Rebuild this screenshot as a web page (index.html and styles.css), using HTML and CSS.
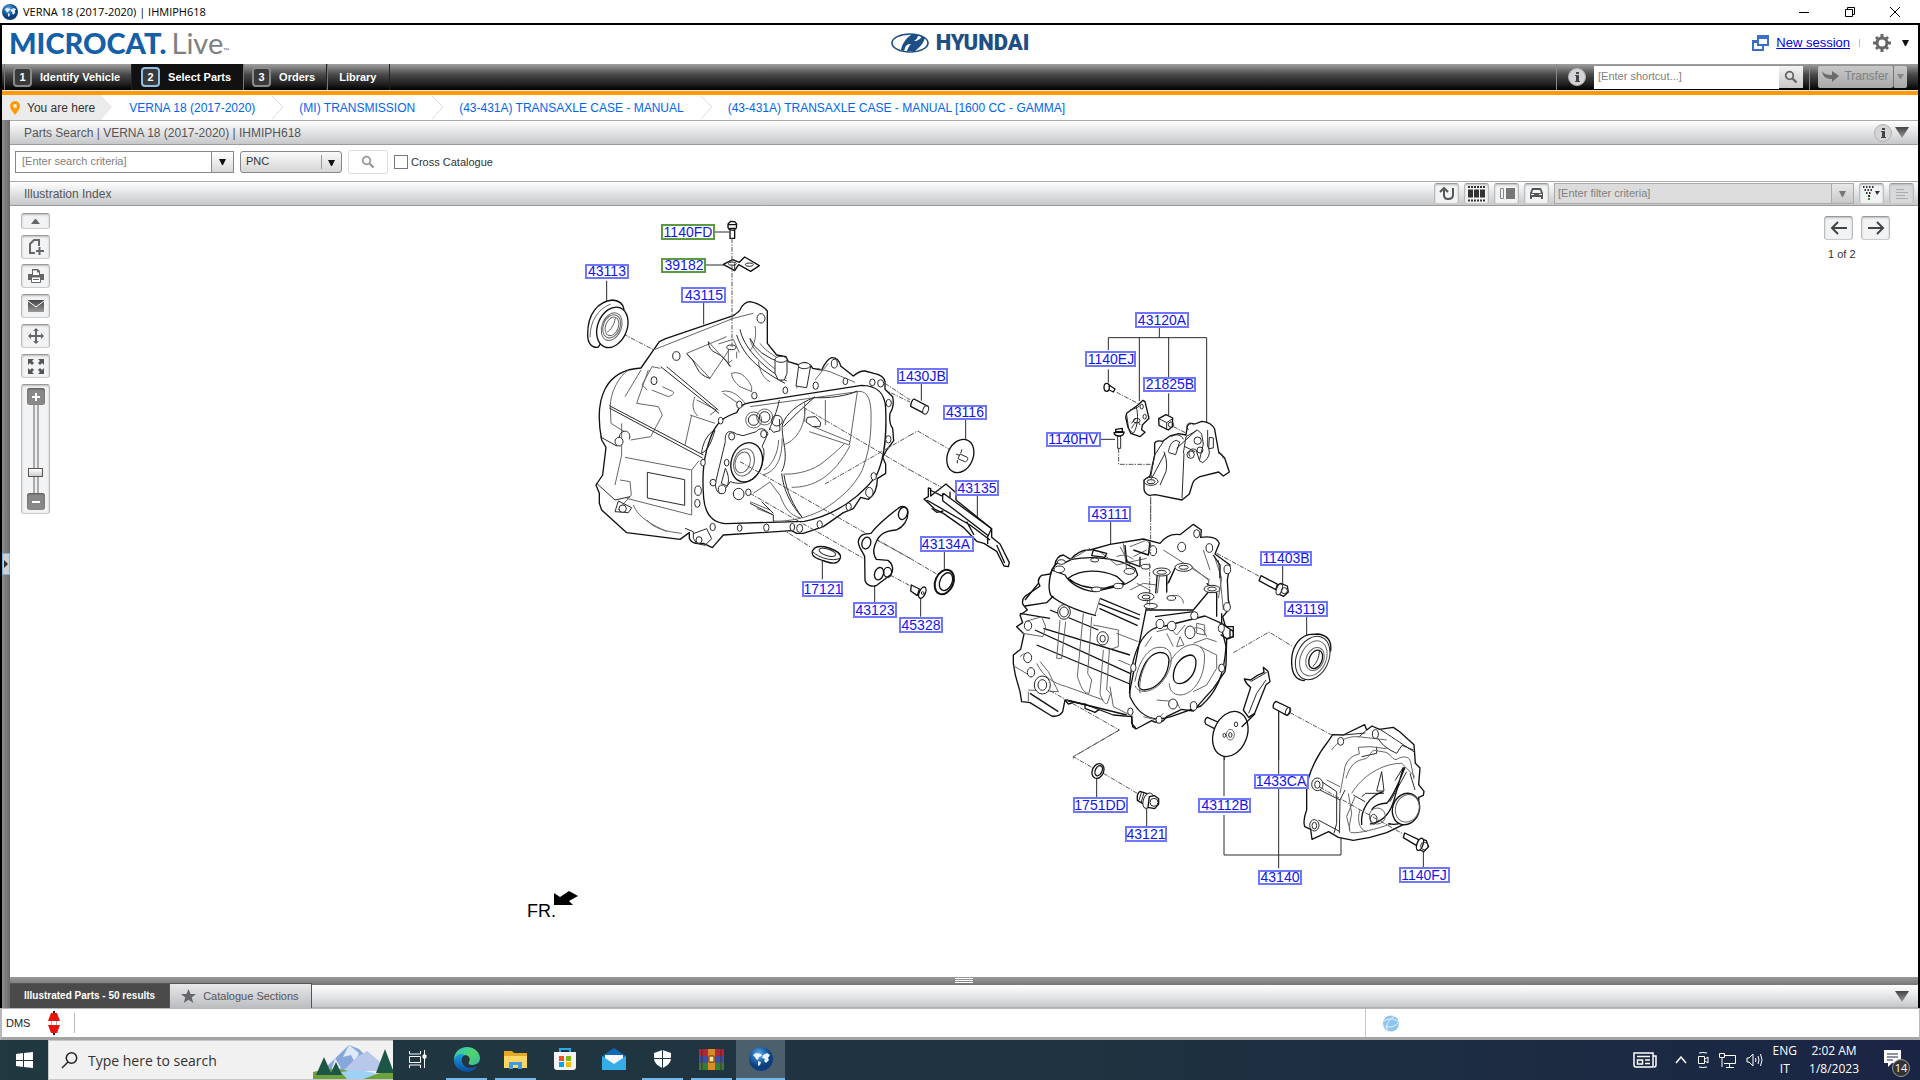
FILE: index.html
```html
<!DOCTYPE html>
<html lang="en">
<head>
<meta charset="utf-8">
<title>VERNA 18 (2017-2020) | IHMIPH618</title>
<link rel="stylesheet" href="styles.css">
</head>
<body>
<svg class="defs" aria-hidden="true">
  <defs>
    <radialGradient id="globeFill" cx="40%" cy="30%"><stop offset="0" stop-color="#6fb2ea"/><stop offset=".6" stop-color="#1f66ae"/><stop offset="1" stop-color="#0d3f7c"/></radialGradient>
    <linearGradient id="steel" x2="0" y2="1"><stop offset="0" stop-color="#444"/><stop offset="1" stop-color="#999"/></linearGradient>
    <linearGradient id="edge1" x2="1" y2="1"><stop offset="0" stop-color="#2bc3d2"/><stop offset=".5" stop-color="#52d56c"/><stop offset="1" stop-color="#3bb7a0"/></linearGradient>
    <linearGradient id="edge2" x2="0" y2="1"><stop offset="0" stop-color="#1b9de2"/><stop offset="1" stop-color="#0c4a9a"/></linearGradient>
    <symbol id="globe" viewBox="0 0 24 24">
      <circle cx="12" cy="12" r="12" fill="url(#globeFill)"/>
      <path d="M4 8l3-2 5 1 1 2-3 1-1 3-2-1-1-2zM9 14l3 1-1 3-2 1zM14 8l4-2 3 2-2 3 1 2-3 3-2-2 1-2-3-1z" fill="#e7f3fd"/>
    </symbol>
    <symbol id="info" viewBox="0 0 18 18">
      <circle cx="9" cy="9" r="8.500" fill="#d4d4d6" stroke="#b2b2b4"/>
      <path d="M8 4h3v2H8zM7 7h4v6h1v1H7v-1h1V8H7z" fill="#444"/>
    </symbol>
    <symbol id="lens" viewBox="0 0 14 14"><circle cx="5.500" cy="5.500" r="3.800" fill="none" stroke="currentColor" stroke-width="1.800"/><path d="M8.500 8.500l4 4" stroke="currentColor" stroke-width="2.400"/></symbol>
    <symbol id="down" viewBox="0 0 14 11"><path d="M0 0h14L7 11z" fill="url(#steel)"/></symbol>
  </defs>
</svg>

<header class="titlebar">
  <svg class="title-icon" width="16" height="16"><use href="#globe"/></svg>
  <span class="title-text">VERNA 18 (2017-2020) | IHMIPH618</span>
  <div class="window-buttons">
    <button aria-label="Minimize"><svg width="12" height="12"><path d="M1 6.500h10" stroke="#000"/></svg></button>
    <button aria-label="Restore"><svg width="12" height="12" fill="none" stroke="#000"><path d="M1.500 3.500h7v7h-7zM3.500 3.500v-2h7v7h-2"/></svg></button>
    <button aria-label="Close"><svg width="12" height="12"><path d="M1 1l10 10M11 1L1 11" stroke="#000"/></svg></button>
  </div>
</header>

<div class="shell">
  <div class="brandbar">
    <div class="product"><b>MICROCAT<i>.</i></b><span>Live</span><small>™</small></div>
    <div class="maker">
      <svg width="38" height="20" viewBox="0 0 38 20"><ellipse cx="19" cy="10" rx="18" ry="9" fill="#fff" stroke="#1d4f86" stroke-width="1.600"/><path d="M10 17C11 11 15 5 20 2l7 0c0 3-2 5-4 6 2 0 3 0 4-1 2-1 3-2 4-4l3 2c-2 6-6 10-10 13l-8 0c1-3 2-5 4-7-2 0-3 0-4 1-2 1-2 4-3 6z" fill="#1d4f86"/></svg>
      <span>HYUNDAI</span>
    </div>
    <div class="session">
      <svg width="17" height="17" viewBox="0 0 17 17"><path d="M5 0h12v11h-5v5H0V5h5zM7 4v5h8V4zM5 8H2v6h8v-3H5z" fill="#3c6fc8" fill-rule="evenodd"/></svg>
      <a href="#">New session</a>
      <span class="bar"></span>
      <button class="gear" aria-label="Settings">
        <svg width="18" height="18" viewBox="0 0 18 18"><circle cx="9" cy="9" r="5" fill="none" stroke="#666" stroke-width="3"/><path d="M9 0v4M9 14v4M0 9h4M14 9h4M3 3l2 2M13 13l2 2M3 15l2-2M13 5l2-2" stroke="#666" stroke-width="3"/></svg>
        <svg width="7" height="6"><path d="M0 0h7L4 6H3z" fill="#111"/></svg>
      </button>
    </div>
  </div>

  <nav class="mainnav">
    <a class="step" href="#"><span>1</span>Identify Vehicle</a>
    <a class="step current" href="#"><span>2</span>Select Parts</a>
    <a class="step" href="#"><span>3</span>Orders</a>
    <a class="step plain" href="#">Library</a>
    <div class="nav-tools">
      <svg width="18" height="18"><use href="#info"/></svg>
      <input type="text" aria-label="Shortcut" placeholder="[Enter shortcut...]"><button class="go" aria-label="Search"><svg width="14" height="14"><use href="#lens"/></svg></button>
      <div class="transfer">
        <button><svg width="17" height="11" viewBox="0 0 17 11"><path d="M0 0c2 3 5 4 10 4V0l7 5-7 6V8C4 8 1 6 0 0z" fill="#6b6b6b"/></svg>Transfer</button><button aria-label="Transfer options"><svg width="7" height="5"><path d="M0 0h7L4 5H3z" fill="#888"/></svg></button>
      </div>
    </div>
  </nav>

  <nav class="crumbs" aria-label="Breadcrumb">
    <span class="here"><svg width="10" height="14" viewBox="0 0 10 14"><path fill-rule="evenodd" d="M5 0a5 5 0 0 1 5 5c0 3-3 6-5 9C3 11 0 8 0 5a5 5 0 0 1 5-5zm0 3a2 2 0 1 0 0 4 2 2 0 0 0 0-4z" fill="#ff9900"/></svg>You are here</span>
    <svg class="chev" width="12" height="25"><path d="M0 0h1l11 12L1 25H0z" fill="#ebebeb"/></svg>
    <a href="#">VERNA 18 (2017-2020)</a>
    <svg class="chev" width="12" height="25"><path d="M0 1l11 11L0 24" fill="none" stroke="#ddd"/></svg>
    <a href="#">(MI) TRANSMISSION</a>
    <svg class="chev" width="12" height="25"><path d="M0 1l11 11L0 24" fill="none" stroke="#ddd"/></svg>
    <a href="#">(43-431A) TRANSAXLE CASE - MANUAL</a>
    <svg class="chev" width="12" height="25"><path d="M0 1l11 11L0 24" fill="none" stroke="#ddd"/></svg>
    <a href="#">(43-431A) TRANSAXLE CASE - MANUAL [1600 CC - GAMMA]</a>
  </nav>

  <div class="workspace">
    <aside class="rail"><button aria-label="Expand sidebar"><svg width="4" height="8"><path d="M0 0l4 4-4 4z" fill="#333"/></svg></button></aside>
    <main>
      <header class="panel-head">
        <h2>Parts Search | VERNA 18 (2017-2020) | IHMIPH618</h2>
        <div class="head-end"><svg width="18" height="18"><use href="#info"/></svg><svg width="14" height="11"><use href="#down"/></svg></div>
      </header>
      <form class="searchbar">
        <div class="combo"><input type="text" aria-label="Search criteria" placeholder="[Enter search criteria]"><button type="button" aria-label="Recent searches"><svg width="7" height="6"><path d="M0 0h7L4 6H3z" fill="#111"/></svg></button></div>
        <div class="pick"><select aria-label="Search type"><option>PNC</option></select><svg width="28" height="14"><path d="M.5 0v14" stroke="#999"/><path d="M7 5h7l-3 6h-1z" fill="#111"/></svg></div>
        <button type="button" class="find" aria-label="Search"><svg width="14" height="14"><use href="#lens"/></svg></button>
        <label class="tick"><input type="checkbox">Cross Catalogue</label>
      </form>
      <header class="panel-head">
        <h2>Illustration Index</h2>
        <div class="filters">
          <button class="tool" aria-label="Back"><svg width="16" height="14" fill="none" stroke="#555" stroke-width="2"><path d="M5 3v5c0 3 1 4 4 4s5-1 5-4V1M1 5l4-4 4 4"/></svg></button>
          <button class="tool" aria-label="Thumbnails"><svg width="18" height="16"><path d="M0 1h18M0 14.500h18" stroke="#333" stroke-width="2" stroke-dasharray="2 1"/><path d="M0 3.500h5v8H0zM6 3.500h5v8H6zM12 3.500h5v8h-5z" fill="#333"/></svg></button>
          <button class="tool" aria-label="List"><svg width="16" height="13"><path d="M1.500 1.500h3v10h-3z" fill="none" stroke="#888"/><path d="M7 1h9v11H7z" fill="#777"/></svg></button>
          <button class="tool" aria-label="Vehicle"><svg width="13" height="13"><path fill-rule="evenodd" d="M2 1h9l2 5v6h-2v-2H2v2H0V6zM3 3L2 6h9l-1-3zM1 7v1h3V7zM9 7v1h3V7z" fill="#555"/></svg></button>
          <div class="combo wide"><input type="text" aria-label="Filter criteria" placeholder="[Enter filter criteria]"><button aria-label="Filter options"><svg width="7" height="6"><path d="M0 0h7L4 6H3z" fill="#777"/></svg></button></div>
          <button class="tool" aria-label="Filter"><svg width="17" height="15"><path d="M0 1h11M1.500 4h9M3 7h6" stroke="#333" stroke-width="2" stroke-dasharray="1.500 1.500"/><path d="M5 9h2v2H5zM12 5h5l-3 4z" fill="#333"/><path d="M5 12h2v2H5z" fill="#2b9b2b"/></svg></button>
          <button class="tool" aria-label="Details" disabled><svg width="14" height="12"><path d="M1 1.500h8M1 4.500h12M1 7.500h9M1 10.500h12" stroke="#aaa"/></svg></button>
        </div>
      </header>

      <section class="canvas">
        <div class="tools">
          <button class="tool short" aria-label="Collapse"><svg width="9" height="5"><path d="M0 5l4-5h1l4 5z" fill="#666"/></svg></button>
          <button class="tool tall" aria-label="Add note"><svg width="16" height="16" fill="none" stroke="#666" stroke-width="2"><path d="M7 14H2V5l4-4h5v6M11.500 8v8M8 12h8"/></svg></button>
          <button class="tool tall" aria-label="Print"><svg width="16" height="14"><path d="M4 0h6l2 2v3H4zM0 5h16v6h-3V8H3v3H0z" fill="#666"/><path d="M5 1.500h4v2h2V6H5z" fill="#fff"/><path d="M3.500 8h9v5.500h-9zM5 10.500h6" fill="#fff" stroke="#666"/></svg></button>
          <button class="tool tall" aria-label="Email"><svg width="16" height="12"><path d="M0 0h16v12H0z" fill="url(#steel)"/><path d="M0 1l8 6 8-6" fill="none" stroke="#fff"/></svg></button>
          <button class="tool tall" aria-label="Pan"><svg width="16" height="16"><path d="M7 3h2v4h4v2H9v4H7V9H3V7h4zM5 3l3-3 3 3zM5 13l3 3 3-3zM3 5L0 8l3 3zM13 5l3 3-3 3z" fill="#666"/></svg></button>
          <button class="tool tall" aria-label="Fit"><svg width="16" height="15"><path d="M0 0h6L4 2l2 2-2 2-2-2-2 2zM16 0h-6l2 2-2 2 2 2 2-2 2 2zM0 15h6l-2-2 2-2-2-2-2 2-2-2zM16 15h-6l2-2-2-2 2-2 2 2 2-2z" fill="#555"/></svg></button>
          <div class="zoomer">
            <button aria-label="Zoom in"><svg width="18" height="17"><path d="M5 9h8M9 5v8" stroke="#fff" stroke-width="2"/></svg></button>
            <input type="range" min="0" max="100" value="20" aria-label="Zoom">
            <button aria-label="Zoom out"><svg width="18" height="17"><path d="M5 9h8" stroke="#fff" stroke-width="2"/></svg></button>
          </div>
        </div>

        <svg class="drawing" viewBox="504 206 920 771" role="group" aria-label="Transaxle case, exploded view">
          <!-- clutch housing -->
          <svg x="570" y="210" width="340" height="350" viewBox="0 0 1020 1050" class="ink">
            <g class="axis"><path d="M160 372l90 47M940 538l80 38M920 990l100 55M570 915l150 95"/></g>
            <path d="M432 66h45M110 212v62M401 278v65M407 165h55"/>
            <path fill="#fff" class="bold" d="M480 55h14v30h-14zM474 42l8-8 12 1 6 7-1 12-8 7-13-2-4-6zM474 44h25"/>
            <path fill="#fff" class="bold" d="M460 163L488 149L508 157L524 141L568 167L542 184L506 164L494 182z"/><ellipse cx="487" cy="161" rx="12" ry="5"/><ellipse cx="538" cy="164" rx="12" ry="5"/><path d="M494 160v22"/>
            <g>
              <path fill="#fff" class="bold" d="M53 375C52 310 85 274 128 270c22 2 32 14 34 28l-78 114c-20 2-31-14-31-37z"/>
              <ellipse cx="127" cy="352" rx="44" ry="63" transform="rotate(22 127 352)" fill="#fff" class="bold"/>
              <g class="thin"><ellipse cx="125" cy="350" rx="29" ry="43" transform="rotate(22 125 350)"/><ellipse cx="125" cy="349" rx="25" ry="36" transform="rotate(22 125 349)"/><ellipse cx="126" cy="349" rx="19" ry="29" transform="rotate(22 126 349)"/><path d="M60 382c0-50 25-85 62-100M112 366c10-6 20-20 24-42"/></g>
            </g>
            <path fill="#fff" class="bold" d="M213 474L268 395L287 386L490 317Q506 306 510 300C516 284 530 275 540 275Q575 282 592 303V400L620 435L648 440L655 455L688 465L704 457L722 466L728 475L755 480Q770 448 785 443Q806 442 812 468L850 498Q868 482 885 483L912 490Q942 496 945 515V538L968 560Q974 590 960 610Q956 640 968 655L971 692L950 720L938 742L947 762V790L922 806Q922 850 895 868L872 862L850 896L820 908L760 950L700 970H680L665 962L460 975L427 1013L400 1000Q365 1005 358 985V968L330 988L265 980L170 968L95 900L88 880V850L78 825L98 795L108 712L95 690C70 560 110 480 213 474z"/>
            <path class="bold" d="M500 608c8-20 19-26 40-30l335-52c45 0 70 25 72 68 3 80-1 150-29 205-60 75-130 118-215 135l-236 7c-40-3-62-32-66-77-6-75 0-130 24-190 18-42 42-55 75-66z"/>
            <path class="thin" d="M540 590l330-46c20 2 30 18 33 58 2 75-6 125-27 180-25 50-70 88-117 117-47 25-105 37-150 34"/>
            <path d="M635 785c25-50-2-95 2-140 10-35 50-65 95-82 45 2 100-5 130-20M642 795c8 50 28 92 55 128M635 790c5 50 28 95 60 130M628 570c-8 40-20 60-30 90M640 650Q690 600 735 560"/>
            <g class="thin">
              <path d="M862 545l-22 150-110-45M840 695l-2 10-120-40M704 575v60M766 570v75M640 792c28 2 75-5 110-28 40-30 60-50 75-65M665 832c65 0 125-30 175-125M640 705c35-12 65-50 65-110M550 850l50-34 30 40c15 40 30 60 62 68M540 875l60 25M560 895l50 20"/>
              <path d="M350 430l120-50M350 430l70 75 60-90M415 395l68 75M445 402l45-14 18 40M475 420v40l12-10M500 425v20M232 540l-16-15 30-55 25 5M245 540l50 20c15-5 20-12 12-16l-30-14M235 480l-35 100 65 10 12 25-35 65-60 10M175 480c-30 20-55 70-54 110l2 50 40 25M365 615l-20 90M360 615l75 25M165 742L365 780l22-28M155 640v95l-20 90M365 780v135L170 865M380 570l60 30-20 15M375 560c-8 20-10 40 8 58M485 490c30-10 50 20 60 40v15l-35-15c-15-12-25-25-25-40zM455 545c30-10 60 20 70 35M460 550l60 40M540 385c5 40 60 80 110 120M570 400c20 30 60 40 60 60M565 455c5 30 15 50 35 60M555 348c5 25 0 55-15 75M625 470v40M640 470l-5 45M690 485l-10 50M740 475l40 10 75 32M775 460l-40 50M230 930c20 25 60 35 105 40M190 885c15 40 60 60 100 80M150 810l30 5 4 40-40 45M213 480L165 560M250 420l240-95 60-15"/>
            </g>
            <path d="M118 587L400 735M118 594l280 150M272 470l175 140M290 470l155 130M232 787l112 22v77l-112-22zM500 375c20 60 60 100 145 145M510 358c10 50 60 110 140 155M540 385q20 50 100 75M415 395q0 25 25 35t40 40M350 432q20 15 30 40t40 33M90 680l50 28 10-35c15-20 35-5 28 15M80 820l55 50 45-10M135 905l10-32 40 20-10 15zM345 955l25 10v20l10 15 25 6 20-20-15-30-40 15"/>
            <path d="M540 880l70 35v20M575 875l35 35"/>
            <path fill="#fff" d="M615 450v40l10 20h18l8-20v-40zM686 468l-8 60 32 5 12-65z"/><ellipse cx="633" cy="448" rx="18" ry="9" fill="#fff"/><ellipse cx="703" cy="467" rx="18" ry="9" fill="#fff"/>
            <path d="M480 665c-15 0-15 20-14 30l-30 125c0 20 10 35 20 30l25-35c40 15 80-5 95-50 8-30 8-50 0-55l18-40c-10-20-30-15-35-5l-40 12-20-5c-5-5-15-7-19-7z"/>
            <ellipse cx="530" cy="757" rx="46" ry="60" transform="rotate(18 530 757)" class="bold"/>
            <g class="thin"><ellipse cx="522" cy="757" rx="30" ry="42" transform="rotate(18 522 757)"/><ellipse cx="518" cy="757" rx="22" ry="32" transform="rotate(18 518 757)"/><circle cx="551" cy="630" r="24"/><circle cx="584" cy="621" r="24"/><path d="M578 795c40-10 60-50 58-110M582 780c25-15 42-50 44-90"/></g>
            <path d="M600 655l10 12 20-5-2-35"/>
            <circle cx="551" cy="630" r="16"/><circle cx="584" cy="621" r="16"/><circle cx="621" cy="632" r="16"/>
            <path d="M435 660c-25 10-40 50-40 70 20-10 32-40 40-70zM466 775l-12 45 18 8c6-15 4-35-6-53z"/>
            <g fill="#fff"><ellipse cx="573" cy="325" rx="12" ry="14"/><ellipse cx="319" cy="438" rx="11" ry="13"/><ellipse cx="252" cy="512" rx="9" ry="12"/><ellipse cx="147" cy="695" rx="12" ry="13"/><ellipse cx="452" cy="632" rx="7" ry="10"/><ellipse cx="508" cy="584" rx="8" ry="11"/><ellipse cx="553" cy="557" rx="8" ry="10"/><ellipse cx="646" cy="541" rx="7" ry="10"/><ellipse cx="737" cy="527" rx="8" ry="11"/><ellipse cx="826" cy="514" rx="7" ry="10"/><ellipse cx="907" cy="517" rx="8" ry="10"/><ellipse cx="932" cy="520" rx="9" ry="11"/><ellipse cx="956" cy="579" rx="8" ry="11"/><ellipse cx="955" cy="688" rx="8" ry="11"/><ellipse cx="911" cy="799" rx="8" ry="11"/><ellipse cx="898" cy="847" rx="11" ry="15"/><ellipse cx="836" cy="890" rx="8" ry="11"/><ellipse cx="749" cy="943" rx="8" ry="11"/><ellipse cx="689" cy="955" rx="9" ry="12"/><ellipse cx="667" cy="951" rx="7" ry="11"/><ellipse cx="589" cy="953" rx="8" ry="11"/><ellipse cx="509" cy="954" rx="7" ry="10"/><ellipse cx="428" cy="951" rx="8" ry="11"/><ellipse cx="382" cy="880" rx="8" ry="12"/><ellipse cx="384" cy="842" rx="10" ry="14"/><ellipse cx="399" cy="758" rx="7" ry="10"/><ellipse cx="485" cy="679" rx="9" ry="11"/><ellipse cx="581" cy="672" rx="9" ry="11"/><ellipse cx="470" cy="758" rx="7" ry="10"/><ellipse cx="429" cy="818" rx="9" ry="10"/><ellipse cx="456" cy="838" rx="11" ry="13"/><ellipse cx="506" cy="852" rx="16" ry="17"/><ellipse cx="535" cy="847" rx="8" ry="10"/><ellipse cx="158" cy="896" rx="11" ry="11"/><ellipse cx="387" cy="990" rx="9" ry="10"/><ellipse cx="793" cy="461" rx="9" ry="13"/><ellipse cx="484" cy="412" rx="14" ry="7"/></g>
            <path d="M712 622l25-2 15 18-2 12h-22l-20-14z"/>
            <g class="axis"><path d="M486 85V415M700 592L1020 780M765 822L1020 676M510 755L1020 1045M540 850L880 1045"/></g>
          </svg>

          <!-- release fork, bushings and seals -->
          <svg x="780" y="350" width="260" height="300" viewBox="0 0 780 900" class="ink">
            <g class="axis"><path d="M315 100l75 50M390 360l100 55M390 256l23-13 95 55M390 625l85 50M330 675l60 32"/></g>
            <path d="M424 102v50M557 210v57M592 436v70M493 604v54M127 630v58M284 706v50M422 740v60"/>
            <path fill="#fff" class="bold" d="M402 147l42 22c0 10-5 20-10 22l-42-22c0-10 5-20 10-22z"/><ellipse cx="437" cy="180" rx="8" ry="13" transform="rotate(20 437 180)" fill="#fff"/>
            <ellipse cx="541" cy="318" rx="38" ry="52" transform="rotate(24 541 318)" fill="#fff" class="bold"/><path d="M540 312l22 10c4 6-2 14-8 13l-20-9zM532 330v10M546 298l-4 12M528 312l10 4"/>
            <path fill="#fff" class="bold" d="M432 447L445 440V414L452 416V438L498 402L528 428V450L635 536V562L660 582L688 638L685 650L672 648L650 604L612 580L590 574L550 532L490 490L465 478z"/>
            <path class="bold" d="M490 430l145 106M488 452l137 105M488 430v22M510 425v20M440 450l130 75 60 45M450 420l40 20M560 515l22 40M635 535l-12 25v22M650 585l24 54M455 475l15 12 20-4"/>
            <path fill="#fff" class="bold" d="M357 473c10-6 27-6 27 15 0 20-12 42-35 52-35 2-58 12-68 60 0 12 2 20 8 28l35 3c15 10 18 30 8 43l-42 32c-15 7-32-2-35-15l-1-72c-10-20-20-30-19-45 5-25 25-22 38-24 20-27 55-55 84-77z"/>
            <g class="bold"><ellipse cx="369" cy="490" rx="13" ry="19" transform="rotate(18 369 490)"/><ellipse cx="259" cy="579" rx="13" ry="18" transform="rotate(18 259 579)"/><ellipse cx="297" cy="671" rx="13" ry="19" transform="rotate(18 297 671)"/><ellipse cx="323" cy="667" rx="12" ry="15"/></g>
            <ellipse cx="493" cy="696" rx="27" ry="38" transform="rotate(24 493 696)" fill="#fff" class="heavy"/><ellipse cx="498" cy="695" rx="18" ry="28" transform="rotate(24 498 695)" class="bold"/>
            <path fill="#fff" class="bold" d="M97 604c8-20 30-16 50-10 20 7 38 15 34 30-8 22-28 16-48 9-20-6-40-12-36-29z"/><ellipse cx="142" cy="607" rx="26" ry="10" transform="rotate(18 142 607)"/><path d="M98 605c20 20 60 30 82 20"/>
            <path fill="#fff" class="bold" d="M394 705l24 12-6 20-20-14z"/><ellipse cx="427" cy="728" rx="9" ry="18" transform="rotate(24 427 728)" fill="#fff" class="bold"/><circle cx="428" cy="729" r="4"/>
          </svg>

          <!-- mounting bracket -->
          <svg x="1030" y="300" width="320" height="220" viewBox="0 0 960 660" class="ink">
            <path d="M388 82v31M235 150v-37h295v260M328 113v190M416 113v118M235 208v40M416 280v66M210 418h45"/>
            <g class="axis"><path d="M260 277l65 34M430 380l50 25M266 445v48h100M362 590v70"/></g>
            <path fill="#fff" class="bold" d="M237 255l18 12-5 9-18-9z"/><ellipse cx="230" cy="262" rx="8" ry="12" fill="#fff" class="bold"/>
            <path fill="#fff" class="bold" d="M290 340l34-25 15-14 6 4 12 50-20 20-2 14 10 8-15 13-28-10-8-18-7-30z"/><path d="M290 345l6 42 14 14M300 330c15-5 20-5 28-12M318 355l-14 15M305 385c10-20 20-25 25-10M318 320c8 20 6 60-8 80"/><ellipse cx="335" cy="320" rx="5" ry="7"/><ellipse cx="344" cy="350" rx="5" ry="7"/><ellipse cx="320" cy="362" rx="10" ry="7"/>
            <path fill="#fff" class="bold" d="M386 356l22-12 20 10-1 26-12 10-28-14z"/><path d="M386 356l24 12 18-12M410 368v22"/><circle cx="423" cy="374" r="8"/>
            <path fill="#fff" d="M263 408h9v37h-9z"/><path fill="#fff" class="bold" d="M252 398l30-2c0 8-5 12-15 12s-14-4-15-10zM257 388l20-3v10h-20z"/>
            <path fill="#fff" class="bold" d="M374 465V430Q378 420 398 424L420 408L446 401L468 405L472 378Q480 366 495 372L515 364Q545 366 554 388L566 456L584 474L598 516L580 528L566 516L510 530Q488 540 486 556L478 582L456 600L376 584L358 586Q342 580 342 566V540L360 528z"/>
            <path d="M362 530L374 465L400 425M402 455L408 475Q412 500 408 515L390 555M365 535L405 460M415 455c5-20 8-30 24-34l10 5-12 38-20-6zM460 460l8-50 35-20 12 12 5 30-12 50 10 6c20-15 25-30 15-50v-48M425 410c10-10 30-6 35 8M440 445l60-55M462 460l-6 135M465 440l30 15M480 470c-10-15 5-30 18-20l10 30M538 412l12 2v30l-14 2zM565 460c15 0 12 10 15 15M475 390c-12-18 5-28 16-15"/><ellipse cx="363" cy="544" rx="21" ry="12"/><ellipse cx="363" cy="545" rx="12" ry="6"/><circle cx="482" cy="464" r="11"/><circle cx="503" cy="422" r="11"/><circle cx="510" cy="450" r="9"/>
            <path class="axis" d="M364 500v45"/>
          </svg>

          <!-- gear case, baffle plate and outer bearing -->
          <svg x="1000" y="500" width="350" height="260" viewBox="0 0 1050 780" class="ink">
            <path d="M332 66v66M848 196v58M920 350v58M836 632v148M673 770v10"/>
            <path fill="#fff" class="bold" d="M60 575L46 525L40 490V465L62 448L72 402L50 380L68 368L60 345L82 330L68 312Q66 296 74 290L120 258Q108 240 125 226L150 222L165 195Q168 168 190 165L212 178Q238 148 270 150L330 133L430 117L480 130Q505 98 540 104L580 73L604 90L602 112Q650 105 658 130L645 162L690 195L682 240L685 300Q694 325 668 350L676 378L700 394V410L680 418L678 495L675 515L640 565L600 610L580 633L545 628L500 650Q482 678 455 662L408 687L398 680L395 650L340 645L260 615L195 600L188 635Q178 652 155 648L90 608L65 605z"/>
            <path class="bold" d="M155 212c-10 30-10 60-2 75 30 25 80 45 135 60M155 210c10-20 20-25 40-22l20-10c70-12 130 0 160 12l30 15 8 20c-10 15-30 25-50 32l-80 18c-40-5-75-25-88-50zM205 235c40-30 100-25 145-6l22 20-55 15c-50 3-90-8-112-29z"/>
            <g class="bold"><path d="M390 590c-5-60 10-130 35-170 20-30 40-40 70-42l120-30 45 20 18 70c-5 90-30 140-75 180l-90 32c-60 20-100-10-123-60zM415 550c10-50 30-85 60-92 20-3 30 8 32 20 0 50-35 90-75 92-12 0-17-10-17-20zM520 530c0-30 20-60 50-65 12 0 18 10 18 20 0 40-28 65-50 66-10 0-18-8-18-21z"/></g>
            <path class="bold" d="M440 320l-30 150-22 110M440 330l140 0 50-60M465 350l115-15M620 250l30 30v70"/>
            <g class="thin"><path d="M405 545c10-60 40-105 75-103 50-2 40 70 0 110-30 28-65 30-75 5M508 490c30-60 90-75 105-30 5 60-25 120-70 125-25 0-35-15-35-35M470 395l40-10 20 20 25-30M500 400l20 40M455 410l-20 30M530 440l10-30 12 25zM580 430l40-15 30 10M600 440l50 25v40l-30 50-40 20M560 400c15-20 35-20 50-10l10 20M470 600l60 5 10 20M420 580c-5-40 10-80 30-110M590 400v-30l24 5v30z"/></g>
            <path class="bold" d="M110 435L390 552M105 390L390 520M130 385L390 465M300 295l120 50M298 325l115 52M295 310l124 48M115 250L75 300M75 318l65-10 20-20M150 330l145 60M90 580l85 55M60 340l90 15M200 600l180 45"/>
            <g class="thin"><path d="M180 360l-10 115h15l12-110M250 340l-18 190c10 25 15 50 35 50l8-40-12-20 12-170M310 450l-10 130c5 20 15 35 22 30l10-30-12-10 8-120M280 375l75 15v50l-30 10M330 560l10 60 60 30M110 490c20 40 50 60 90 70l110 40M120 485l25 30 30 60-90-5M75 365l50-15 12 30-8 30-60-10M480 215l-8 65M500 220v60M530 195l-30 60M575 200l50 40 5 40M410 250l40 20-10 45M390 270l40-20 40 5M210 180l60-35M360 140l30 55M300 155l50 40 90-20M370 130l10 80M390 140l50-20M400 170l40-20M350 170c20-8 30-5 50 8M440 120l30 40M490 150l140 90M610 150l20 60M645 175l20 60-10 60M655 180l15 150M430 650l40 10 20-20M60 470c15-15 30-8 35 0M45 500l50 30M85 605v-30M510 290c20-10 40 0 40 20M300 295l-15 50M350 400l65 25M355 480l35 15"/></g>
            <path class="bold" d="M665 340v30l15 10h20v30l-20 6-18-12M690 390v25M255 610v15l30 12 12-8M395 650v20l12 14M195 600l10 12 15-4M472 220l-5 60M500 225v52M280 150l40 10-5 12-40-5zM375 135l5 50 40 15M400 150l45 15 5-40M420 170v30M525 205l-20 45M640 165l20 30v40"/>
            <g fill="#fff"><ellipse cx="178" cy="208" rx="16" ry="10"/><ellipse cx="388" cy="214" rx="16" ry="9"/><ellipse cx="184" cy="186" rx="12" ry="7"/><ellipse cx="284" cy="180" rx="12" ry="6"/><ellipse cx="289" cy="268" rx="14" ry="7"/><ellipse cx="355" cy="258" rx="14" ry="8"/><ellipse cx="485" cy="216" rx="26" ry="12"/><ellipse cx="485" cy="217" rx="14" ry="6"/><ellipse cx="551" cy="202" rx="26" ry="12"/><ellipse cx="551" cy="202" rx="14" ry="6"/><ellipse cx="438" cy="290" rx="24" ry="12"/><ellipse cx="438" cy="291" rx="12" ry="6"/><ellipse cx="514" cy="294" rx="13" ry="7"/><ellipse cx="636" cy="267" rx="24" ry="11"/><ellipse cx="636" cy="267" rx="13" ry="6"/><ellipse cx="452" cy="318" rx="20" ry="8"/><ellipse cx="192" cy="336" rx="19" ry="22"/><ellipse cx="192" cy="336" rx="13" ry="15"/><ellipse cx="308" cy="415" rx="17" ry="20"/><ellipse cx="308" cy="416" rx="8" ry="10"/><ellipse cx="84" cy="377" rx="11" ry="14"/><ellipse cx="83" cy="473" rx="12" ry="15"/><ellipse cx="93" cy="517" rx="11" ry="14"/><ellipse cx="127" cy="555" rx="24" ry="27"/><ellipse cx="127" cy="555" rx="13" ry="16"/><ellipse cx="480" cy="372" rx="12" ry="14"/><ellipse cx="583" cy="347" rx="11" ry="12"/><ellipse cx="664" cy="385" rx="9" ry="12"/><ellipse cx="665" cy="504" rx="9" ry="12"/><ellipse cx="581" cy="618" rx="10" ry="13"/><ellipse cx="519" cy="612" rx="13" ry="15"/><ellipse cx="477" cy="659" rx="9" ry="11"/><ellipse cx="391" cy="635" rx="8" ry="11"/><ellipse cx="400" cy="503" rx="8" ry="12"/><ellipse cx="515" cy="378" rx="13" ry="14"/><ellipse cx="570" cy="397" rx="15" ry="19"/><ellipse cx="682" cy="208" rx="10" ry="13"/><ellipse cx="681" cy="321" rx="10" ry="13"/><ellipse cx="545" cy="141" rx="12" ry="14"/><ellipse cx="628" cy="144" rx="10" ry="13"/><ellipse cx="459" cy="152" rx="11" ry="15"/><ellipse cx="590" cy="101" rx="9" ry="12"/><ellipse cx="437" cy="200" rx="14" ry="7"/></g>
            <g class="axis"><path d="M452 0v160M449 190v130M650 160l130 70M700 458l107-62 72 44M150 572l208 118-138 80v10M870 638l140 75"/></g>
            <path fill="#fff" class="bold" d="M783 227l50 26-6 16-50-27z"/><path fill="#fff" class="bold" d="M832 256l10-6 20 8 3 18-14 13-18-8z"/><ellipse cx="838" cy="268" rx="8" ry="17" transform="rotate(20 838 268)" fill="#fff"/><circle cx="853" cy="272" r="9"/>
            <path fill="#fff" class="bold" d="M875 490c-2-40 15-75 50-86l30-2c30 5 40 25 37 50l-80 90c-25-2-36-20-37-52z"/><ellipse cx="938" cy="474" rx="48" ry="68" transform="rotate(24 938 474)" fill="#fff"/><g class="thin"><ellipse cx="940" cy="475" rx="38" ry="55" transform="rotate(24 940 475)"/><ellipse cx="945" cy="477" rx="26" ry="36" transform="rotate(24 945 477)"/></g><ellipse cx="947" cy="478" rx="19" ry="29" transform="rotate(24 947 478)" class="bold"/><path d="M938 500c12-10 20-30 20-48"/>
            <path fill="#fff" class="bold" d="M733 537L752 540Q772 524 792 517L790 502L804 514L810 545L798 554L764 640L746 652L730 630L752 562Q738 552 733 537z"/><path d="M752 545l48-28M798 540L770 580L746 640"/>
            <path fill="#fff" class="bold" d="M622 652l45 20-8 22-42-22c-5-8-1-17 5-20z"/><ellipse cx="691" cy="702" rx="50" ry="70" transform="rotate(22 691 702)" fill="#fff" class="bold"/><path class="bold" d="M725 681l40-40"/><ellipse cx="691" cy="704" rx="12" ry="16" class="thin"/><ellipse cx="691" cy="705" rx="5" ry="7"/><ellipse cx="708" cy="673" rx="5" ry="7"/><ellipse cx="673" cy="706" rx="4" ry="6"/>
            <path fill="#fff" class="bold" d="M828 604l42 20c2 8-3 18-10 22l-40-22c-2-8 2-17 8-20z"/><ellipse cx="864" cy="634" rx="7" ry="12" transform="rotate(20 864 634)"/>
          </svg>

          <!-- rear cover and drain plug -->
          <svg x="1060" y="650" width="400" height="250" viewBox="0 0 1200 750" class="ink">
            <path d="M492 318v120M492 495v120h351v-52M656 415v240M656 182v190M110 385v56M260 475v54M1090 605v46"/>
            <g class="axis"><path d="M178 240L40 320l60 35M130 370l105 62"/></g>
            <ellipse cx="114" cy="363" rx="17" ry="23" transform="rotate(24 114 363)" fill="#fff" class="bold"/><ellipse cx="116" cy="362" rx="10" ry="16" transform="rotate(24 116 362)" class="bold"/>
            <path fill="#fff" class="bold" d="M240 424l30 10-12 32-26-15c-2-14 2-22 8-27z"/><ellipse cx="264" cy="452" rx="14" ry="24" transform="rotate(20 264 452)" fill="#fff"/><path fill="#fff" class="bold" d="M268 440l16-3 12 9v16l-12 14-20-4z"/><circle cx="282" cy="457" r="12"/><path d="M245 425l-8 26M252 428l-8 28"/>
            <path fill="#fff" class="bold" d="M740 420L744 390Q760 330 806 272L818 254L850 255L914 224L920 240L936 228L958 238L1000 232L1020 246L1062 284L1066 340L1080 354L1076 404L1092 424L1090 436L1076 442Q1080 500 1030 524L980 548L930 562L880 571L835 562L806 545L756 568L752 538L734 530Q728 510 740 480z"/>
            <path d="M850 255l66-6M895 262l25-22M955 235c40 25 60 40 110 72M950 262Q970 290 990 300L1010 310L1026 286L1060 300M905 320l45-10v-20M855 420l-15 30-2 100M770 385l60 40v95l-8 30M780 420l60 30M775 510l65 35M880 435l35 20M965 365l-15 58 22 0zM1040 365l-50 90M1030 352l-25 40M1050 370l15 50M905 440l12-10 55 0"/>
            <path class="thin" d="M815 300c20-30 50-42 80-40l85 10M858 385c10-30 20-50 50-57 25-2 20-25 35-27l35 6c15 5 15 20 30 22 20-12 40-12 44 8l10 50M875 430c30-50 90-90 150-90l40 40M840 430Q850 380 855 350Q865 318 898 312L895 292L930 290L980 296M865 430l10 60c-5 30-12 50-2 58 30 2 70-10 120-26M800 390l40 20M900 480c-10 30-2 60 20 65M885 440L860 500L870 540"/>
            <path class="bold" d="M905 525c-5-45 25-90 65-100M1030 352l-30 105c-10 30-30 60-70 65M935 480c5-12 30-22 45-20 20-20 40-70 55-108M985 520c25 10 60-5 80-30"/>
            <circle cx="952" cy="498" r="24" class="thin"/><ellipse cx="941" cy="508" rx="10" ry="15"/><ellipse cx="1038" cy="477" rx="40" ry="48" transform="rotate(20 1038 477)" fill="#fff" class="bold"/><ellipse cx="1042" cy="475" rx="35" ry="42" transform="rotate(20 1042 475)" class="thin"/>
            <g fill="#fff"><ellipse cx="842" cy="274" rx="9" ry="12"/><ellipse cx="946" cy="252" rx="9" ry="13"/><ellipse cx="772" cy="403" rx="17" ry="19"/><ellipse cx="772" cy="404" rx="8" ry="11"/><ellipse cx="763" cy="526" rx="14" ry="17"/><ellipse cx="763" cy="527" rx="7" ry="10"/></g>
            <path class="axis" d="M780 412l250 140"/>
            <path fill="#fff" class="bold" d="M1034 549l42 20-6 18-40-24zM1085 567l14 5 7 18-14 15-20-8z"/><ellipse cx="1080" cy="583" rx="9" ry="19" transform="rotate(20 1080 583)" fill="#fff" class="bold"/><circle cx="1093" cy="588" r="11"/>
          </svg>

          <path d="M554 893l6 4 9-6 9 5-9 5 4 4h-19z"/>
          <text class="front" x="527" y="917">FR.</text>

          <a class="part seen" href="#"><rect x="662" y="225" width="52" height="14"/><text x="688" y="237">1140FD</text></a>
          <a class="part seen" href="#"><rect x="662" y="259" width="43" height="13"/><text x="684" y="270">39182</text></a>
          <a class="part" href="#"><rect x="586" y="265" width="42" height="13"/><text x="607" y="276">43113</text></a>
          <a class="part" href="#"><rect x="682" y="288" width="43" height="14"/><text x="704" y="300">43115</text></a>
          <a class="part" href="#"><rect x="898" y="369" width="49" height="14"/><text x="922" y="381">1430JB</text></a>
          <a class="part" href="#"><rect x="944" y="406" width="42" height="13"/><text x="965" y="417">43116</text></a>
          <a class="part" href="#"><rect x="956" y="481" width="42" height="14"/><text x="977" y="493">43135</text></a>
          <a class="part" href="#"><rect x="921" y="537" width="52" height="14"/><text x="946" y="549">43134A</text></a>
          <a class="part" href="#"><rect x="803" y="582" width="39" height="14"/><text x="823" y="594">17121</text></a>
          <a class="part" href="#"><rect x="854" y="603" width="42" height="14"/><text x="875" y="615">43123</text></a>
          <a class="part" href="#"><rect x="900" y="618" width="42" height="14"/><text x="921" y="630">45328</text></a>
          <a class="part" href="#"><rect x="1136" y="313" width="52" height="14"/><text x="1162" y="325">43120A</text></a>
          <a class="part" href="#"><rect x="1086" y="352" width="49" height="14"/><text x="1111" y="364">1140EJ</text></a>
          <a class="part" href="#"><rect x="1144" y="378" width="51" height="13"/><text x="1170" y="389">21825B</text></a>
          <a class="part" href="#"><rect x="1047" y="433" width="53" height="13"/><text x="1073" y="444">1140HV</text></a>
          <a class="part" href="#"><rect x="1089" y="507" width="41" height="14"/><text x="1110" y="519">43111</text></a>
          <a class="part" href="#"><rect x="1261" y="552" width="50" height="13"/><text x="1286" y="563">11403B</text></a>
          <a class="part" href="#"><rect x="1285" y="602" width="42" height="14"/><text x="1306" y="614">43119</text></a>
          <a class="part" href="#"><rect x="1074" y="798" width="53" height="14"/><text x="1100" y="810">1751DD</text></a>
          <a class="part" href="#"><rect x="1126" y="827" width="40" height="14"/><text x="1146" y="839">43121</text></a>
          <a class="part" href="#"><rect x="1199" y="799" width="51" height="13"/><text x="1225" y="810">43112B</text></a>
          <a class="part" href="#"><rect x="1255" y="775" width="53" height="13"/><text x="1281" y="786">1433CA</text></a>
          <a class="part" href="#"><rect x="1259" y="871" width="42" height="13"/><text x="1280" y="882">43140</text></a>
          <a class="part" href="#"><rect x="1400" y="868" width="49" height="14"/><text x="1424" y="880">1140FJ</text></a>
        </svg>

        <div class="pager">
          <div class="pager-buttons">
            <button class="tool big" aria-label="Previous"><svg width="18" height="14" fill="none" stroke="#444" stroke-width="2"><path d="M17 7H2M8 1L2 7l6 6"/></svg></button>
            <button class="tool big" aria-label="Next"><svg width="18" height="14" fill="none" stroke="#444" stroke-width="2"><path d="M1 7h15M10 1l6 6-6 6"/></svg></button>
          </div>
          <span>1 of 2</span>
        </div>
      </section>

      <div class="splitter"><svg width="18" height="6"><path d="M0 .5h18M0 2.500h18M0 4.500h18" stroke="#fff"/></svg></div>
      <div class="tabs">
        <button class="tab on">Illustrated Parts - 50 results</button>
        <button class="tab"><svg width="15" height="14" viewBox="0 0 15 14"><path d="M7.500 0l2 5h5.500l-4.300 3.500L12.300 14l-4.800-3.300L2.700 14l1.600-5.500L0 5h5.500z" fill="#666"/></svg>Catalogue Sections</button>
        <svg class="tabs-end" width="14" height="11"><use href="#down"/></svg>
      </div>
    </main>
  </div>
</div>

<footer class="status">
  <div class="dms">DMS
    <svg width="12" height="24" viewBox="0 0 12 24"><path d="M6 0v24" stroke="#222" stroke-width="2"/><path d="M3 2h6l3 8H0zM0 14h12l-3 8H3z" fill="#e8120c"/><path d="M0 10h12v4H0z" fill="#fff"/><path d="M3.500 10v4M8.500 10v4" stroke="#7bc"/></svg>
    <span class="bar"></span>
  </div>
  <div class="online"><svg width="18" height="17" viewBox="0 0 18 17"><circle cx="9" cy="8.500" r="8" fill="#8cc4ef"/><path d="M2 6c5-3 10-3 14 1M5 15C4 9 7 4 13 1M3 11c5 2 9 1 13-3" stroke="#e8f5ff" fill="none"/></svg></div>
</footer>

<div class="taskbar">
  <button class="start" aria-label="Start"><svg width="17" height="16"><path d="M0 2l7-1v7H0zM8 1l9-1v8H8zM0 9h7v6l-7-1zM8 9h9v7l-9-1z" fill="#fff"/></svg></button>
  <label class="search">
    <svg width="17" height="17" fill="none" stroke="#222" stroke-width="1.500"><circle cx="10.500" cy="6" r="5.200"/><path d="M7 10l-6 6"/></svg>
    <input type="text" aria-label="Search" placeholder="Type here to search">
    <svg class="scene" width="80" height="34" viewBox="0 0 80 34"><path d="M8 27L36 0l10 4 20 20z" fill="#87a6da"/><path d="M36 0l-6 12 8-2 4 8 4-10zM22 13l6 10-10 4z" fill="#dfe8f7"/><path d="M44 12l10-6 24 20H30z" fill="#b7c8ea"/><path d="M0 27q20-6 40 0t40-3v10H0z" fill="#6ea03e"/><path d="M28 27q20-4 36 2l-14 5H34z" fill="#9ed2f5"/><path d="M11 12l-8 18h16zM23 17l-6 13h12zM72 4l-9 24h18z" fill="#1c5746"/></svg>
  </label>
  <button class="app" aria-label="Task view"><svg width="18" height="18" fill="none" stroke="#fff"><path d="M.5 1v3h11V1M.5 6.500h11v6H.5zM.5 18v-3h11v3M15.500 0v18"/><path d="M14 5h3v3h-3z" fill="#fff"/></svg></button>
  <button class="app open" aria-label="Edge"><svg width="26" height="25" viewBox="0 0 26 25"><path d="M0 13C0 5 6 0 13 0c8 0 13 6 13 11 0 5-4 7-8 7-3 0-4-1-3-3 2-3 0-7-4-7-6 0-10 4-11 5z" fill="url(#edge1)"/><path d="M0 13c2-6 7-7 11-5-5 2-4 9 1 12 4 2 8 1 11-1-3 5-7 6-11 6C4 24 0 19 0 13z" fill="url(#edge2)"/></svg></button>
  <button class="app open" aria-label="File Explorer"><svg width="23" height="19"><path d="M0 1h8l2 2h13v15H0z" fill="#e5a823"/><path d="M0 6h23v12H0z" fill="#ffd767"/><path d="M5 19v-7h13v7h-4v-4H9v4z" fill="#3f9be5"/></svg></button>
  <button class="app" aria-label="Store"><svg width="24" height="24"><path d="M7 6V2h10v4" fill="none" stroke="#2fa9e8" stroke-width="2"/><path d="M1 5h22v15q0 3-3 3H4q-3 0-3-3z" fill="#f4f4f4"/><path d="M6 9h5v5H6z" fill="#f25022"/><path d="M13 9h5v5h-5z" fill="#7fba00"/><path d="M6 15h5v5H6z" fill="#00a4ef"/><path d="M13 15h5v5h-5z" fill="#ffb900"/></svg></button>
  <button class="app" aria-label="Mail"><svg width="24" height="22"><path d="M0 8l12-8 12 8v14H0z" fill="#1269b8"/><path d="M3 7h18v10H3z" fill="#f6f8fb"/><path d="M0 8l12 8 12-8v14H0z" fill="#35aee8"/></svg></button>
  <button class="app open" aria-label="Security"><svg width="17" height="18"><path d="M8.500 0L17 3v5c0 5-4 8-8.500 10C4 16 0 13 0 8V3z" fill="#fff"/><path d="M8.500 0v18M0 8.500h17" stroke="#203640" stroke-width="1"/></svg></button>
  <button class="app open" aria-label="Archive"><svg width="25" height="23"><path d="M0 1h25v7H0z" fill="#b0273b"/><path d="M0 8h25v7H0z" fill="#3c4fa8"/><path d="M0 15h25v7H0z" fill="#2f7f36"/><path d="M9 1h7v21H9z" fill="#d98b28"/><path d="M10 8h5v6h-5zM3 1v21M22 1v21" fill="#f7e3a0" stroke="#5b2a18"/></svg></button>
  <button class="app open active" aria-label="Microcat"><svg width="24" height="24"><use href="#globe"/></svg></button>
  <div class="tray">
    <svg width="24" height="16" fill="none" stroke="#fff" stroke-width="1.500"><path d="M1 1h19v14H3q-2 0-2-2zM20 4h3v9q0 2-2 2M4 4.500h13M12 8h5M12 11.500h5M4.500 8h5v4h-5z"/></svg>
    <svg width="12" height="8" fill="none" stroke="#fff" stroke-width="1.500"><path d="M1 7l5-6 5 6"/></svg>
    <svg width="12" height="16" fill="none" stroke="#fff"><path d="M2 1q4-1 8 0M2 15q4 1 8 0M1.500 4.500h6v7h-6zM8 7l3-2v6L8 9"/></svg>
    <svg width="17" height="15" fill="none" stroke="#fff"><path d="M6 2.500h10.500v8H5M10.500 11v3M7 14.500h8M.5.500h5v4h-5zM3 5v9"/></svg>
    <svg width="17" height="14" fill="none" stroke="#fff"><path d="M1 5h2l4-4v12L3 9H1zM9.500 5q1 2 0 4M12 3q2 4 0 8M14.500 1q3 6 0 12"/></svg>
    <div class="stack"><span>ENG</span><span>IT</span></div>
    <div class="stack clock"><span>2:02 AM</span><span>1/8/2023</span></div>
    <button class="notices" aria-label="Notifications"><svg width="18" height="17"><path d="M0 0h17v13H8l-4 4v-4H0z" fill="#fff"/><path d="M3 4h11M3 7h11M3 10h6" stroke="#1b2a44"/></svg><span>14</span></button>
  </div>
</div>
</body>
</html>
```
FILE: styles.css
```css
* { box-sizing: border-box; }
body {
  margin: 0;
  min-height: 100vh;
  display: flex;
  flex-direction: column;
  background: #fff;
  color: #333;
  font: 11px/14px "Liberation Sans", Arial, sans-serif;
}
button { font: inherit; color: inherit; border: 0; padding: 0; margin: 0; background: none; display: flex; align-items: center; justify-content: center; }
input, select { font: inherit; margin: 0; border-radius: 0; }
input::placeholder { color: #808080; opacity: 1; }
svg { display: block; flex: none; }
.defs { position: absolute; width: 0; height: 0; }

/* window frame */
.titlebar { height: 23px; display: flex; align-items: center; padding: 0 3px 0 2px; gap: 5px; }
.title-text { font: 11px/20px "Open Sans", "Noto Sans", sans-serif; color: #000; }
.window-buttons { margin-left: auto; display: flex; }
.window-buttons button { width: 46px; height: 22px; }
.window-buttons button:last-child { width: 44px; }
.shell { flex: 1; display: flex; flex-direction: column; border: 2px solid #000; border-bottom: 0; }

/* brand row */
.brandbar { height: 39px; display: grid; grid-template-columns: 1fr auto 1fr; align-items: center; padding: 0 12px 0 7px; }
.product { display: flex; align-items: baseline; color: #7d7f82; font: 29px/32px Lato, sans-serif; padding-top: 2px; }
.product b { color: #1460a8; font-weight: 900; }
.product i { font-style: normal; }
.product span { margin-left: 5px; }
.product small { font-size: 8px; }
.maker { display: flex; align-items: center; gap: 7px; margin-left: 5px; color: #1d4f86; font: 900 22px/24px Roboto, sans-serif; padding-bottom: 6px; }
.session { display: flex; align-items: center; justify-content: flex-end; gap: 7px; padding-bottom: 6px; font-size: 13px; }
.session a { color: #0000e6; }
.bar { width: 1px; background: #b4bcc0; }
.session .bar { height: 8px; margin: 0 6px 0 2px; }
.gear { gap: 11px; margin-right: -3px; }

/* main navigation */
.mainnav { height: 27px; display: flex; border-bottom: 1px solid #e8e8e8; background: linear-gradient(#a0a0a0, #4a4a4a 40%, #1c1c1c 80%, #000); padding-left: 2px; }
.step { display: flex; align-items: center; gap: 8px; padding: 0 11px 0 8px; color: #fff; font-weight: 700; text-decoration: none; border-right: 1px solid #222; border-left: 1px solid #777; }
.step span { width: 19px; height: 20px; border: 2px solid #8a8a8a; border-radius: 4px; background: #3a3a3a; line-height: 16px; text-align: center; }
.step.current { background: #111; border-color: #111; }
.step.current span { border-color: #8fbfe2; }
.step.plain { padding: 0 13px 0 11px; }
.nav-tools { margin-left: auto; display: flex; align-items: center; border-left: 1px solid #888; padding: 0 11px; }
.nav-tools input { width: 185px; height: 23px; margin-left: 8px; border: 0; padding: 0 4px 2px; }
.go { width: 24px; height: 22px; background: linear-gradient(#f4f4f4, #c8c8c8); color: #666; }
.transfer { align-self: stretch; display: flex; align-items: center; margin-left: 6px; padding-left: 8px; border-left: 1px solid #888; color: #808080; font-size: 12px; }
.transfer button { height: 22px; background: linear-gradient(#c8c8c8, #a8a8a8); border-radius: 2px; gap: 5px; width: 75px; padding-bottom: 2px; }
.transfer button + button { width: 14px; border-left: 1px solid #777; }

/* breadcrumb */
.crumbs { height: 29px; display: flex; align-items: center; border-top: 4px solid #ff9900; font-size: 12px; }
.here { align-self: stretch; display: flex; align-items: center; gap: 7px; padding: 0 5px 0 8px; background: #ebebeb; }
.crumbs a { color: #0066ee; text-decoration: none; }
.chev { margin: 0 15px 0 17px; }
.here + .chev { margin-left: 0; margin-right: 17px; }

/* panels */
.workspace { flex: 1; display: flex; }
.rail { width: 8px; background: linear-gradient(90deg, #8c8c8c, #6a6a6a); display: flex; align-items: center; }
.rail button { width: 8px; height: 22px; background: #d0d0d0; border: 1px solid #7ab4dc; }
main { flex: 1; display: flex; flex-direction: column; min-width: 0; }
.panel-head { height: 25px; display: flex; align-items: center; padding: 0 9px 0 14px; border-top: 1px solid #aaa; border-bottom: 1px solid #9a9a9a; background: linear-gradient(#fff, #e2e3e5 50%, #c6c7c9); }
.panel-head h2 { margin: 0; font: 12px/16px "Liberation Sans", Arial, sans-serif; color: #555; }
.head-end { margin-left: auto; display: flex; align-items: center; gap: 3px; }
.searchbar { height: 36px; display: flex; align-items: center; padding: 0 5px 3px; }
.combo { display: flex; width: 219px; height: 22px; border: 1px solid #888; }
.combo input { flex: 1; min-width: 0; border: 0; padding: 0 6px 2px; background: none; }
.combo button { width: 22px; border-left: 1px solid #888; background: linear-gradient(#fff, #d8d8d8); }
.pick { margin-left: 6px; width: 102px; height: 22px; display: grid; align-items: center; border: 1px solid #888; border-radius: 3px; background: linear-gradient(#fafafa, #d6d6d6); }
.pick select, .pick svg { grid-area: 1 / 1; }
.pick select { appearance: none; border: 0; background: none; padding: 0 5px 2px; height: 20px; color: #333; }
.pick svg { justify-self: end; margin-right: -8px; pointer-events: none; }
.find { width: 40px; height: 24px; margin-left: 6px; border: 1px solid #ddd; border-radius: 3px; color: #999; }
.tick { display: flex; align-items: center; gap: 3px; margin-left: 6px; }
.tick input { appearance: none; width: 14px; height: 14px; border: 1px solid #777; background: #fff; }
.filters { margin-left: auto; display: flex; align-items: center; gap: 5px; margin-right: -5px; }
.tool { width: 25px; height: 21px; border: 1px solid #b8b8b8; border-color: #999 #bbb #ccc; border-radius: 3px; background: #f2f3f5; box-shadow: inset 0 1px 2px #bbb; }
.tool:disabled { background: #d8d9db; }
.combo.wide { width: 300px; height: 21px; background: #dcdcdc; border-color: #aaa; }
.combo.wide input { padding: 0 3px 2px; }
.combo.wide button { background: linear-gradient(#e8e8e8, #c8c8c8); border-color: #aaa; }

/* illustration */
.canvas { flex: 1; display: grid; grid-template-columns: 110px 1fr 110px; min-height: 500px; }
.tools { display: flex; flex-direction: column; padding: 7px 0 0 11px; }
.tool.short { width: 29px; height: 16px; margin-bottom: 6px; }
.tool.tall { width: 29px; height: 24px; margin-bottom: 6px; }
.tool.short + .tall { margin-bottom: 5px; }
.zoomer { width: 29px; height: 130px; display: flex; flex-direction: column; align-items: center; padding: 3px 0; border: 1px solid #aaa; border-color: #999 #bbb #ccc; border-radius: 3px; background: #f2f3f5; box-shadow: inset 0 1px 2px #bbb; }
.zoomer button { width: 18px; height: 17px; border-radius: 3px; background: #888; box-shadow: inset 0 1px 2px #555; }
.zoomer input { appearance: none; writing-mode: vertical-lr; direction: rtl; width: 16px; flex: 1; min-height: 0; background: linear-gradient(90deg, transparent 5px, #aaa 5px, #aaa 7px, #eee 7px, #eee 9px, #aaa 9px, #aaa 11px, transparent 11px); }
.zoomer input::-webkit-slider-thumb { appearance: none; width: 15px; height: 9px; border: 1px solid #555; background: linear-gradient(#fff, #ccc); }
.drawing { width: 100%; height: 0; min-height: 100%; overflow: visible; }
.ink { fill: none; stroke: #2a2a2a; stroke-width: 3; stroke-linejoin: round; }
.ink .bold { stroke: #111; stroke-width: 4; }
.ink .heavy { stroke: #111; stroke-width: 6; }
.ink .thin { stroke: #666; stroke-width: 3; }
.ink .axis { stroke: #555; stroke-dasharray: 14 4 4 4; }
.part rect { fill: none; stroke: #7077ff; stroke-width: 2; }
.part.seen rect { stroke: #5a9b40; }
.part text { fill: #1414e6; font-size: 14px; text-anchor: middle; }
.front { font-size: 18px; fill: #000; }
.pager { padding: 10px 0 0 16px; }
.pager-buttons { display: flex; gap: 8px; }
.tool.big { width: 29px; height: 24px; }
.pager span { display: block; padding: 7px 0 0 4px; }

/* lower tabs */
.splitter { height: 8px; display: flex; align-items: center; justify-content: center; background: linear-gradient(#999, #777); }
.tabs { display: flex; align-items: center; height: 23px; padding-right: 9px; background: linear-gradient(#fff, #e0e1e3 60%, #c6c7c9); border-bottom: 1px solid #aab2b4; }
.tab { align-self: stretch; height: 25px; margin-top: -2px; gap: 7px; padding: 0 12px 0 11px; color: #555; border: solid #555; border-width: 1px 1px 0 0; background: linear-gradient(#e8e8ea, #bcbdc0); }
.tab.on { padding: 0 14px; background: #4a4a4a; color: #fff; font-size: 10px; font-weight: 700; }
.tabs-end { margin-left: auto; }

/* status strip */
.status { height: 32px; display: flex; border: 1px solid #b8b8b8; border-left-width: 2px; border-bottom: 3px solid #a4a4a4; background: #fff; }
.dms { flex: 1; display: flex; align-items: center; padding-left: 4px; gap: 18px; color: #222; }
.dms .bar { height: 20px; margin-left: -4px; }
.online { width: 554px; display: flex; align-items: center; padding-left: 16px; border-left: 1px solid #c4c8ca; }

/* taskbar */
.taskbar { height: 40px; display: flex; align-items: stretch; background: linear-gradient(90deg, #203840, #1f3340 55%, #1a2544); color: #fff; font-family: "Open Sans", "Noto Sans", sans-serif; }
.start { width: 48px; }
.search { width: 345px; display: flex; align-items: center; gap: 10px; padding-left: 12px; background: #f1f1f1; border: 1px solid #c8c8c8; border-right: 0; }
.search input { flex: 1; min-width: 0; border: 0; padding: 0; background: none; font-size: 14px; }
.search input::placeholder { color: #333; }
.search .scene { align-self: flex-end; }
.app { width: 49px; border-bottom: 2px solid transparent; }
.app.open { width: 41px; margin: 0 4px; border-color: #76b9ed; }
.app.active { width: 49px; margin: 0; background: #4b606c; }
.tray { margin-left: auto; display: flex; align-items: center; gap: 10px; padding-right: 12px; font-size: 12px; line-height: 18px; }
.tray svg:first-child { margin-right: 8px; }
.stack { display: flex; flex-direction: column; align-items: center; }
.clock { margin: 0 15px 0 2px; }
.notices { position: relative; width: 24px; height: 28px; align-items: flex-start; justify-content: flex-start; padding-top: 4px; }
.notices span { position: absolute; right: -2px; bottom: -3px; width: 18px; height: 18px; border: 1px solid #999; border-radius: 9px; background: #333; font-size: 11px; line-height: 16px; }
.notices svg { margin-right: 0; }
```
